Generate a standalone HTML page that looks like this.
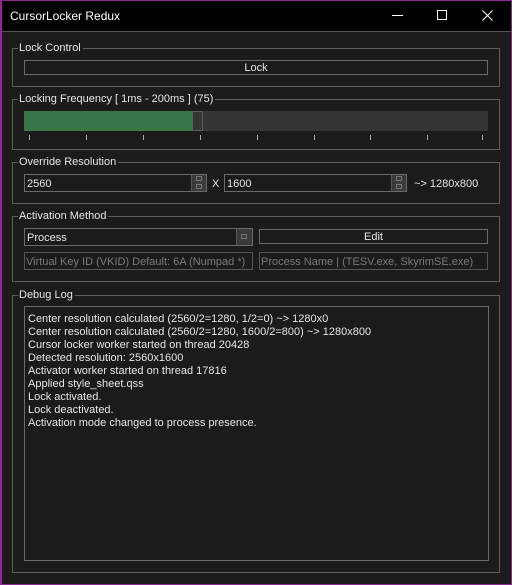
<!DOCTYPE html>
<html><head><style>
*{margin:0;padding:0;box-sizing:border-box}
body{width:512px;height:585px;background:#1b1b1b;font-family:"Liberation Sans",sans-serif;font-size:11px;color:#e6e6e6;position:relative;overflow:hidden}
.a{position:absolute}
.win{left:0;top:0;width:512px;height:585px;border:1px solid #8a2b8e;border-left-width:2px}
.title{left:1px;top:1px;width:510px;height:31px;background:#000;border-bottom:1px solid #555}
.grp{border:1px solid #5e5e5e}
.lbl{background:#1b1b1b;padding:0 2px 0 1px;line-height:12px;font-size:11px;color:#e6e6e6}
.box{border:1px solid #6a6a6a;background:#1b1b1b}
.t{white-space:nowrap;line-height:13px}
.sb{background:#3a3a3a;border-left:1px solid #555}
.sq{width:6px;height:5px;border:1px solid #777}
</style></head><body>
<div class="a title"></div>
<div class="a t" style="left:10px;top:10px;font-size:12px;color:#fff">CursorLocker Redux</div>
<div class="a" style="left:392px;top:15px;width:11px;height:1px;background:#fff"></div>
<div class="a" style="left:437px;top:10px;width:10px;height:10px;border:1px solid #fff"></div>
<svg class="a" style="left:482px;top:10px" width="11" height="11"><path d="M0.5 0.5L10.5 10.5M10.5 0.5L0.5 10.5" stroke="#fff" stroke-width="1.1"/></svg>
<div class="a win"></div>

<div class="a grp" style="left:12px;top:48px;width:488px;height:39px"></div>
<div class="a lbl" style="left:18px;top:42px">Lock Control</div>
<div class="a box" style="left:24px;top:60px;width:464px;height:15px"></div>
<div class="a t" style="left:24px;top:62px;width:464px;text-align:center">Lock</div>

<div class="a grp" style="left:12px;top:99px;width:488px;height:51px"></div>
<div class="a lbl" style="left:18px;top:93px">Locking Frequency [ 1ms - 200ms ] (75)</div>
<div class="a" style="left:24px;top:111px;width:464px;height:20px;background:#353535"></div>
<div class="a" style="left:24px;top:111px;width:169px;height:20px;background:#3a7748"></div>
<div class="a" style="left:192px;top:111px;width:11px;height:20px;background:#353535;border:1px solid #5e5e5e"></div>
<div class="a" style="left:29px;top:131px;width:460px;height:5px">
<svg width="460" height="5"><g stroke="#aaa" stroke-width="1">
<line x1="0.5" y1="0" x2="0.5" y2="5"/><line x1="57.5" y1="0" x2="57.5" y2="5"/><line x1="114.5" y1="0" x2="114.5" y2="5"/><line x1="171.5" y1="0" x2="171.5" y2="5"/><line x1="228.5" y1="0" x2="228.5" y2="5"/><line x1="285.5" y1="0" x2="285.5" y2="5"/><line x1="341.5" y1="0" x2="341.5" y2="5"/><line x1="398.5" y1="0" x2="398.5" y2="5"/><line x1="453.5" y1="0" x2="453.5" y2="5"/></g></svg></div>

<div class="a grp" style="left:12px;top:162px;width:488px;height:42px"></div>
<div class="a lbl" style="left:18px;top:156px">Override Resolution</div>
<div class="a box" style="left:24px;top:174px;width:183px;height:18px"></div>
<div class="a sb" style="left:191px;top:175px;width:15px;height:16px"></div>
<div class="a sq" style="left:196px;top:176px"></div><div class="a sq" style="left:196px;top:184px"></div>
<div class="a t" style="left:27px;top:178px">2560</div>
<div class="a t" style="left:212px;top:178px">X</div>
<div class="a box" style="left:224px;top:174px;width:183px;height:18px"></div>
<div class="a sb" style="left:391px;top:175px;width:15px;height:16px"></div>
<div class="a sq" style="left:396px;top:176px"></div><div class="a sq" style="left:396px;top:184px"></div>
<div class="a t" style="left:227px;top:178px">1600</div>
<div class="a t" style="left:414px;top:178px">~&gt; 1280x800</div>

<div class="a grp" style="left:12px;top:216px;width:488px;height:66px"></div>
<div class="a lbl" style="left:18px;top:210px">Activation Method</div>
<div class="a box" style="left:24px;top:228px;width:229px;height:18px"></div>
<div class="a sb" style="left:236px;top:229px;width:16px;height:16px"></div>
<div class="a sq" style="left:241px;top:234px"></div>
<div class="a t" style="left:27px;top:232px">Process</div>
<div class="a box" style="left:259px;top:229px;width:229px;height:15px"></div>
<div class="a t" style="left:259px;top:231px;width:229px;text-align:center">Edit</div>
<div class="a box" style="left:24px;top:252px;width:229px;height:18px;border-color:#555"></div>
<div class="a t" style="left:26px;top:256px;color:#7a7a7a">Virtual Key ID (VKID) Default: 6A (Numpad *)</div>
<div class="a box" style="left:259px;top:252px;width:229px;height:18px;border-color:#555"></div>
<div class="a t" style="left:261px;top:256px;color:#7a7a7a">Process Name | (TESV.exe, SkyrimSE.exe)</div>

<div class="a grp" style="left:12px;top:295px;width:488px;height:278px"></div>
<div class="a lbl" style="left:18px;top:289px">Debug Log</div>
<div class="a box" style="left:24px;top:306px;width:465px;height:255px"></div>
<div class="a t" style="left:28px;top:313px">Center resolution calculated (2560/2=1280, 1/2=0) ~&gt; 1280x0<br>Center resolution calculated (2560/2=1280, 1600/2=800) ~&gt; 1280x800<br>Cursor locker worker started on thread 20428<br>Detected resolution: 2560x1600<br>Activator worker started on thread 17816<br>Applied style_sheet.qss<br>Lock activated.<br>Lock deactivated.<br>Activation mode changed to process presence.</div>
</body></html>
